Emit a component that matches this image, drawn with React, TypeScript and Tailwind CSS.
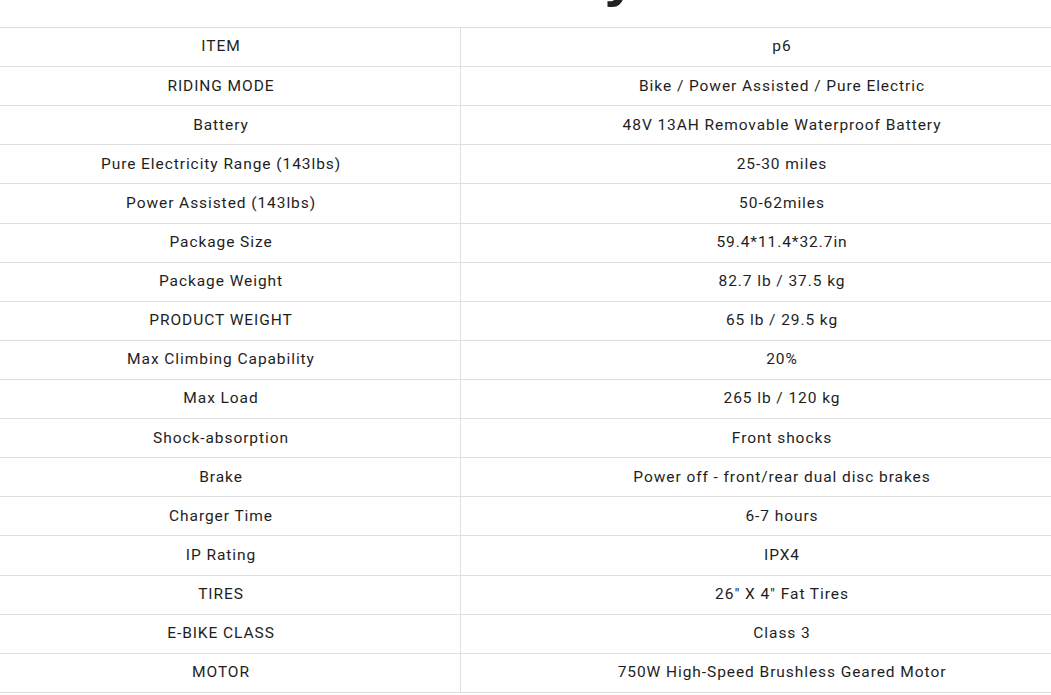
import React from 'react';

const specs: [string, string][] = [
  ['ITEM', 'p6'],
  ['RIDING MODE', 'Bike / Power Assisted / Pure Electric'],
  ['Battery', '48V 13AH Removable Waterproof Battery'],
  ['Pure Electricity Range (143lbs)', '25-30 miles'],
  ['Power Assisted (143lbs)', '50-62miles'],
  ['Package Size', '59.4*11.4*32.7in'],
  ['Package Weight', '82.7 lb / 37.5 kg'],
  ['PRODUCT WEIGHT', '65 lb / 29.5 kg'],
  ['Max Climbing Capability', '20%'],
  ['Max Load', '265 lb / 120 kg'],
  ['Shock-absorption', 'Front shocks'],
  ['Brake', 'Power off - front/rear dual disc brakes'],
  ['Charger Time', '6-7 hours'],
  ['IP Rating', 'IPX4'],
  ['TIRES', '26" X 4" Fat Tires'],
  ['E-BIKE CLASS', 'Class 3'],
  ['MOTOR', '750W High-Speed Brushless Geared Motor'],
];

const App: React.FC = () => {
  return (
    <div className="w-[1051px] h-[695px] overflow-hidden bg-white text-[#1e1e1e] font-['Roboto','Liberation_Sans',sans-serif]">
      {/* section heading, only its descender is in view */}
      <div className="h-[27px] overflow-hidden">
        <div className="-ml-[18px] w-[1121px] pr-[76px] -mt-[49px]">
          <h2 className="text-center text-[58px] leading-[48px] font-bold text-[#222] font-['Liberation_Sans',sans-serif]">
            Summary
          </h2>
        </div>
      </div>

      <div className="-ml-[18px] w-[1121px] border-t border-[#e0e0e0]">
        {specs.map(([label, value]) => (
          <div key={label} className="flex h-[39.12px] border-b border-[#e0e0e0]">
            <div className="w-[479px] shrink-0 border-r border-[#e0e0e0] flex items-center justify-center text-[15.5px] tracking-[0.06em]">
              {label}
            </div>
            <div className="flex-1 flex items-center justify-center text-[15.5px] tracking-[0.06em]">
              {value}
            </div>
          </div>
        ))}
      </div>
    </div>
  );
};

export default App;
